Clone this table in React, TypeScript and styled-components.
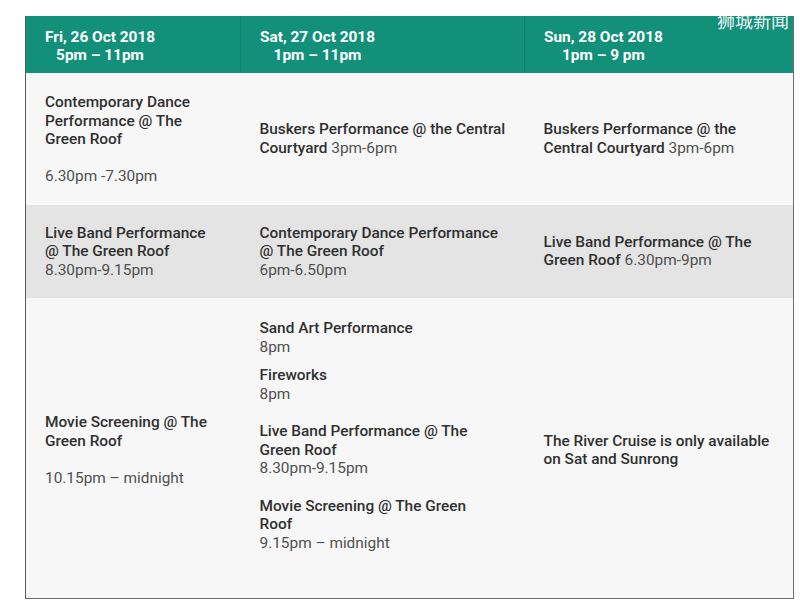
import React from "react";
import styled, { createGlobalStyle } from "styled-components";

const Global = createGlobalStyle`
  html, body { margin: 0; padding: 0; background: #ffffff; }
  body { font-family: Roboto, "Noto Sans", "Liberation Sans", sans-serif; }
`;

const Page = styled.div`
  position: relative;
  width: 800px;
  height: 614px;
  padding: 16px 0 0 25px;
  box-sizing: border-box;
  background: #ffffff;
`;

const Table = styled.table`
  width: 768px;
  table-layout: fixed;
  border-collapse: collapse;
  border-left: 1px solid #5a5a5a;
  border-right: 1px solid #6e6e6e;
  border-bottom: 1px solid #6a6a6a;
  font-size: 15.4px;
  line-height: 18.5px;
`;

const HeadCell = styled.th<{ $last?: boolean }>`
  background: #12907a;
  color: #ffffff;
  font-weight: 700;
  text-align: left;
  padding: 11.5px 20px 8.5px 19px;
  height: 37px;
  border-right: ${(p) => (p.$last ? "none" : "1px solid #0f8571")};
  white-space: nowrap;
`;

const HeadText = styled.span`
  display: inline-block;
  text-align: center;
`;

const Row = styled.tr<{ $shade?: boolean }>`
  background: ${(p) => (p.$shade ? "#e4e4e4" : "#f7f7f7")};
`;

const Cell = styled.td`
  padding: 19px 20px 19px 19px;
  vertical-align: middle;
  white-space: nowrap;
`;

const Stack = styled.div<{ $lead?: number; $trail?: number }>`
  padding-top: ${(p) => p.$lead ?? 0}px;
  padding-bottom: ${(p) => p.$trail ?? 0}px;
`;

const Event = styled.p<{ $space?: number }>`
  margin: ${(p) => p.$space ?? 0}px 0 0;
`;

const Title = styled.span`
  font-weight: 500;
  color: #303030;
`;

const Time = styled.span`
  font-weight: 400;
  color: #505050;
`;

const Watermark = styled.div`
  position: absolute;
  top: 8px;
  left: 717px;
  color: #ffffff;
  font-family: "Noto Sans CJK SC", sans-serif;
  font-size: 18px;
  line-height: 24px;
  opacity: 0.92;
`;

const heads = [
  ["Fri, 26 Oct 2018", "5pm – 11pm"],
  ["Sat, 27 Oct 2018", "1pm – 11pm"],
  ["Sun, 28 Oct 2018", "1pm – 9 pm"],
];

export default function App() {
  return (
    <>
      <Global />
      <Page>
        <Table>
          <colgroup>
            <col style={{ width: 215 }} />
            <col style={{ width: 284 }} />
            <col style={{ width: 269 }} />
          </colgroup>
          <thead>
            <tr>
              {heads.map(([d, t], i) => (
                <HeadCell key={d} $last={i === heads.length - 1}>
                  <HeadText>
                    {d}
                    <br />
                    {t}
                  </HeadText>
                </HeadCell>
              ))}
            </tr>
          </thead>
          <tbody>
            <Row>
              <Cell>
                <Stack $lead={1}>
                  <Event>
                    <Title>
                      Contemporary Dance
                      <br />
                      Performance @ The
                      <br />
                      Green Roof
                    </Title>
                  </Event>
                  <Event $space={18.5}>
                    <Time>6.30pm -7.30pm</Time>
                  </Event>
                </Stack>
              </Cell>
              <Cell>
                <Event>
                  <Title>
                    Buskers Performance @ the Central
                    <br />
                    Courtyard
                  </Title>{" "}
                  <Time>3pm-6pm</Time>
                </Event>
              </Cell>
              <Cell>
                <Event>
                  <Title>
                    Buskers Performance @ the
                    <br />
                    Central Courtyard
                  </Title>{" "}
                  <Time>3pm-6pm</Time>
                </Event>
              </Cell>
            </Row>
            <Row $shade>
              <Cell>
                <Event>
                  <Title>
                    Live Band Performance
                    <br />
                    @ The Green Roof
                  </Title>
                  <br />
                  <Time>8.30pm-9.15pm</Time>
                </Event>
              </Cell>
              <Cell>
                <Event>
                  <Title>
                    Contemporary Dance Performance
                    <br />
                    @ The Green Roof
                  </Title>
                  <br />
                  <Time>6pm-6.50pm</Time>
                </Event>
              </Cell>
              <Cell>
                <Event>
                  <Title>
                    Live Band Performance @ The
                    <br />
                    Green Roof
                  </Title>{" "}
                  <Time>6.30pm-9pm</Time>
                </Event>
              </Cell>
            </Row>
            <Row>
              <Cell>
                <Stack $lead={4}>
                  <Event>
                    <Title>
                      Movie Screening @ The
                      <br />
                      Green Roof
                    </Title>
                  </Event>
                  <Event $space={18.5}>
                    <Time>10.15pm – midnight</Time>
                  </Event>
                </Stack>
              </Cell>
              <Cell>
                <Stack $lead={2} $trail={27}>
                  <Event>
                    <Title>Sand Art Performance</Title>
                    <br />
                    <Time>8pm</Time>
                  </Event>
                  <Event $space={10}>
                    <Title>Fireworks</Title>
                    <br />
                    <Time>8pm</Time>
                  </Event>
                  <Event $space={19}>
                    <Title>
                      Live Band Performance @ The
                      <br />
                      Green Roof
                    </Title>
                    <br />
                    <Time>8.30pm-9.15pm</Time>
                  </Event>
                  <Event $space={19}>
                    <Title>
                      Movie Screening @ The Green
                      <br />
                      Roof
                    </Title>
                    <br />
                    <Time>9.15pm – midnight</Time>
                  </Event>
                </Stack>
              </Cell>
              <Cell>
                <Stack $lead={4}>
                  <Event>
                    <Title>
                      The River Cruise is only available
                      <br />
                      on Sat and Sunrong
                    </Title>
                  </Event>
                </Stack>
              </Cell>
            </Row>
          </tbody>
        </Table>
        <Watermark>狮城新闻</Watermark>
      </Page>
    </>
  );
}
